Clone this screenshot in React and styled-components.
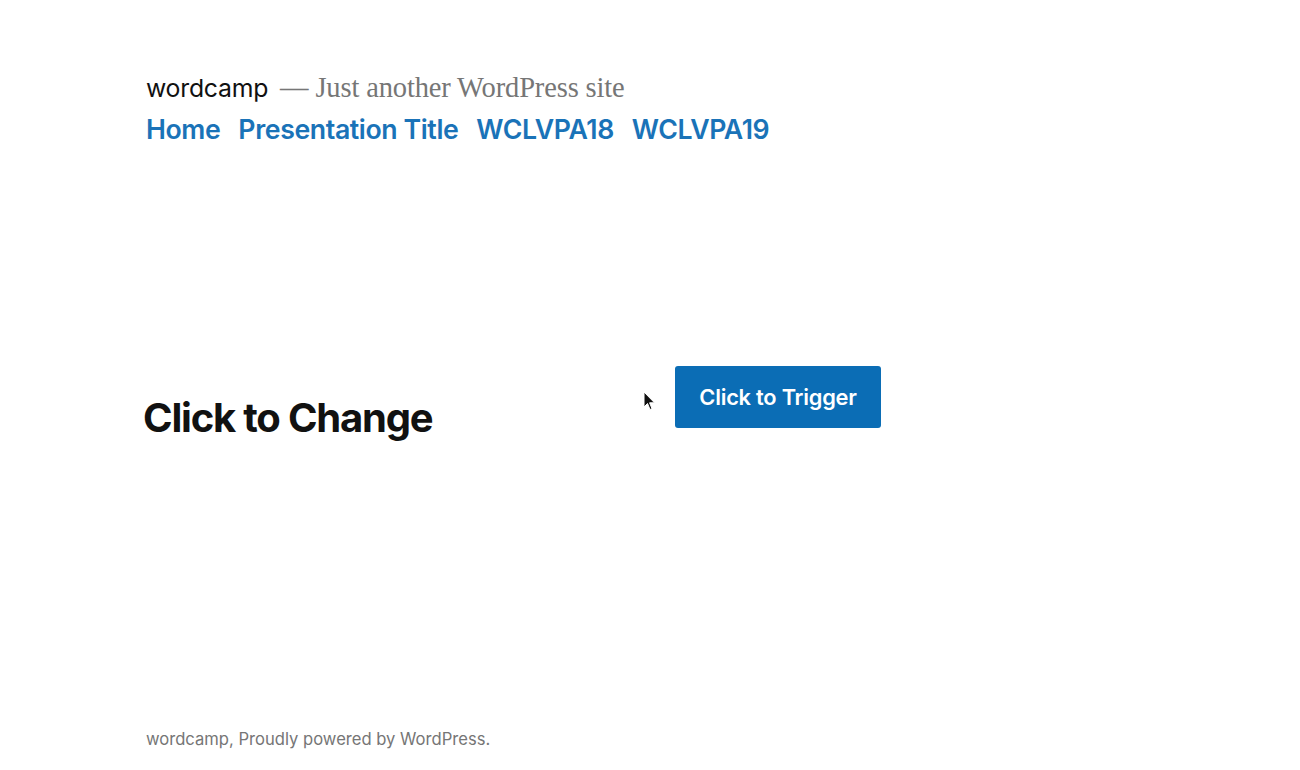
import React from 'react';
import styled, { createGlobalStyle } from 'styled-components';

const GlobalStyle = createGlobalStyle`
  html, body {
    margin: 0;
    padding: 0;
    background: #fff;
  }
  body {
    font-family: Inter, "Noto Sans", sans-serif;
    color: #111;
  }
`;

const Page = styled.div`
  position: relative;
  width: 1300px;
  height: 770px;
  display: flex;
  flex-direction: column;
  padding: 0 146px;
  box-sizing: border-box;
`;

const Header = styled.header`
  display: flex;
  flex-direction: column;
  padding-top: 72px;
`;

const Branding = styled.div`
  display: flex;
  align-items: baseline;
  gap: 12px;
  height: 36px;
`;

const SiteTitle = styled.span`
  font-size: 24.8px;
  font-weight: 400;
  color: #111;
  letter-spacing: -0.01em;
`;

const Tagline = styled.span`
  font-family: "Liberation Serif", "DejaVu Serif", serif;
  font-size: 28.5px;
  color: #767676;
  letter-spacing: -0.005em;
`;

const Nav = styled.nav`
  display: flex;
  gap: 18px;
  margin-top: 3px;
`;

const NavLink = styled.a`
  font-size: 26.7px;
  font-weight: 600;
  color: #1a73b8;
  text-decoration: none;
  letter-spacing: -0.015em;
  line-height: 36px;
`;

const Main = styled.main`
  display: flex;
  align-items: flex-start;
  margin-top: 219px;
  margin-left: -3px;
  flex: 1;
`;

const Column = styled.div`
  display: flex;
  flex: ${p => (p.width ? `0 0 ${p.width}` : '1 1 auto')};
`;

const Heading = styled.h2`
  margin: 28px 0 0;
  font-size: 40px;
  font-weight: 700;
  letter-spacing: -0.03em;
  line-height: 48px;
  color: #111;
`;

const TriggerButton = styled.button`
  width: 206px;
  height: 62px;
  border: none;
  border-radius: 3px;
  background: #0b6db5;
  color: #fff;
  font-family: Inter, "Noto Sans", sans-serif;
  font-size: 21.8px;
  font-weight: 600;
  letter-spacing: -0.01em;
  cursor: pointer;
`;

const Cursor = styled.svg`
  position: absolute;
  left: 643px;
  top: 391px;
`;

const Footer = styled.footer`
  font-size: 16.6px;
  color: #767676;
  padding-bottom: 21px;
`;

export default function App() {
  return (
    <>
      <GlobalStyle />
      <Page>
        <Header>
          <Branding>
            <SiteTitle>wordcamp</SiteTitle>
            <Tagline>— Just another WordPress site</Tagline>
          </Branding>
          <Nav>
            <NavLink href="#">Home</NavLink>
            <NavLink href="#">Presentation Title</NavLink>
            <NavLink href="#">WCLVPA18</NavLink>
            <NavLink href="#">WCLVPA19</NavLink>
          </Nav>
        </Header>
        <Main>
          <Column width="532px">
            <Heading>Click to Change</Heading>
          </Column>
          <Column>
            <TriggerButton>Click to Trigger</TriggerButton>
          </Column>
        </Main>
        <Footer>wordcamp, Proudly powered by WordPress.</Footer>
        <Cursor width="13" height="21" viewBox="0 0 13 21">
          <path d="M1 1 L1 16 L4.5 12.5 L7 18.5 L9 17.7 L6.6 11.8 L11.5 11.8 Z" fill="#111" stroke="#fff" strokeWidth="1" />
        </Cursor>
      </Page>
    </>
  );
}
